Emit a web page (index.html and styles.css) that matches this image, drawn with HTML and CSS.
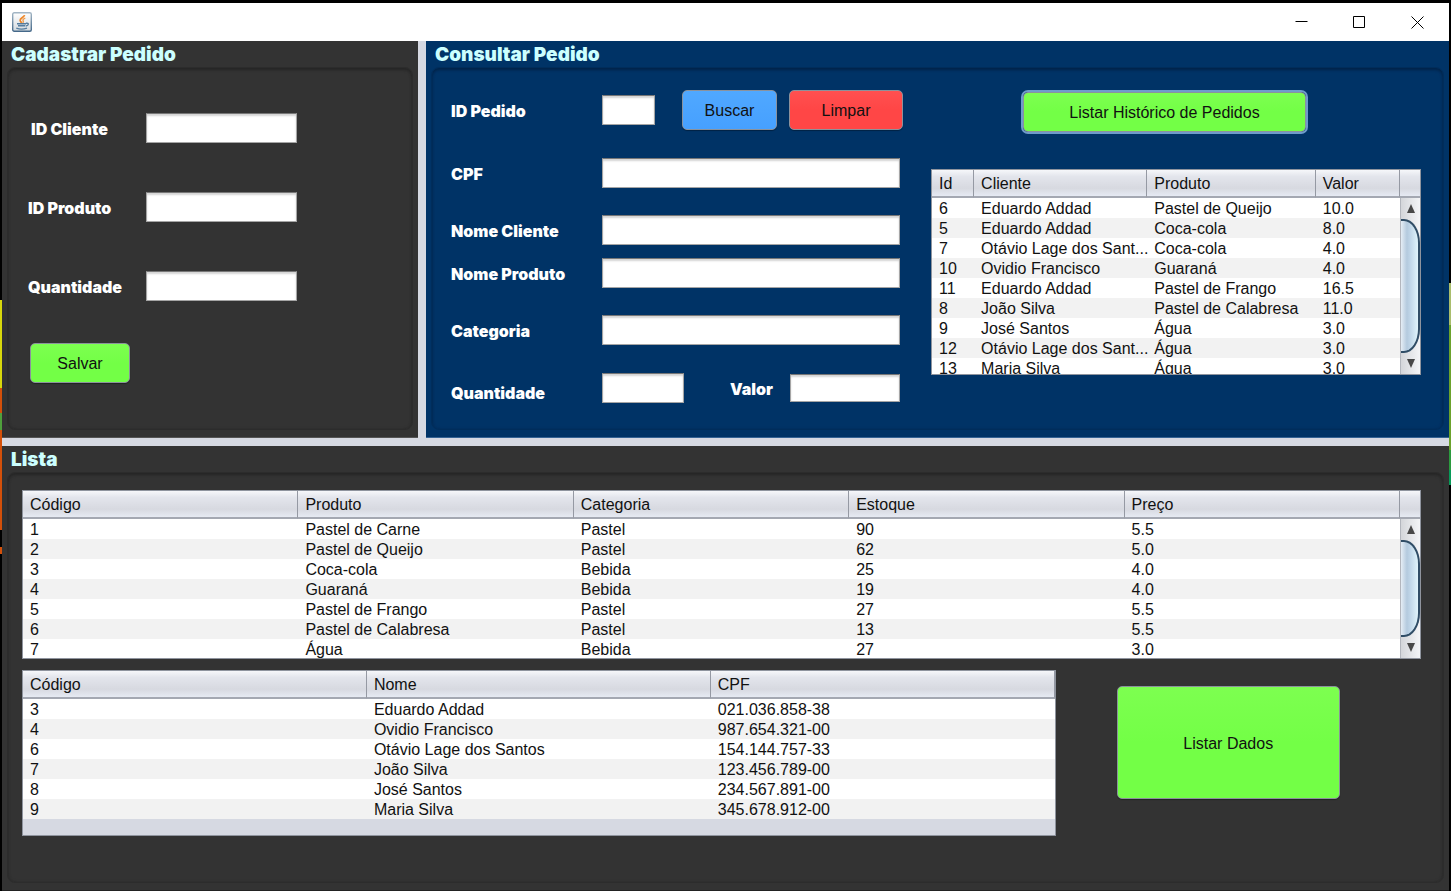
FILE: index.html
```html
<!DOCTYPE html>
<html lang="pt-BR">
<head>
<meta charset="utf-8">
<title>Pedidos</title>
<link rel="stylesheet" href="styles.css">
</head>
<body>
<div class="window">
  <header class="titlebar">
    <svg class="java-icon" viewBox="0 0 20 20" aria-hidden="true">
      <defs>
        <linearGradient id="tile" x1="0" y1="0" x2="0" y2="1"><stop offset="0" stop-color="#fff"/><stop offset="1" stop-color="#d3d9de"/></linearGradient>
        <linearGradient id="rim" x1="0" y1="0" x2="0" y2="1"><stop offset="0" stop-color="#a3b6c5"/><stop offset="1" stop-color="#45698a"/></linearGradient>
      </defs>
      <rect x=".7" y=".7" width="18.6" height="18.6" rx="1.5" fill="url(#tile)" stroke="url(#rim)" stroke-width="1.4"/>
      <path d="M12.6 3.2C12.2 5.2 8 6 8.100 8.200C8.100 9.400 9.300 10 9.600 11" fill="none" stroke="#ee8526" stroke-width="1.700"/>
      <path d="M13.300 6.200C11.300 6.900 10.500 7.800 11.200 9C11.600 9.800 11.300 10.300 10.800 10.900" fill="none" stroke="#f09a48" stroke-width="1.400"/>
      <path d="M5 11.700H14M6 13.700H13.200" fill="none" stroke="#557d9f" stroke-width="1.500"/>
      <path d="M14 11.300C17.200 10.600 17 13.500 13.800 14" fill="none" stroke="#557d9f" stroke-width="1.400"/>
      <path d="M4.300 16.100C7 17.200 12 17.200 15 16.100" fill="none" stroke="#557d9f" stroke-width="1.300"/>
    </svg>
    <div class="window-controls">
      <button type="button" aria-label="Minimizar"><svg viewBox="0 0 13 13"><path d="M.5 5.500H12.500"/></svg></button>
      <button type="button" aria-label="Maximizar"><svg viewBox="0 0 13 13"><path d="M.5 .5H11.500V11.500H.5Z"/></svg></button>
      <button type="button" aria-label="Fechar"><svg viewBox="0 0 13 13"><path d="M.5 .5L12.500 12.500M12.500 .5L.5 12.500"/></svg></button>
    </div>
  </header>

  <main class="panes">
    <section class="pane">
      <h2>Cadastrar Pedido</h2>
      <form class="box register">
        <div class="field first"><label for="cliente">ID Cliente</label><input id="cliente" type="text"></div>
        <div class="field"><label for="produto">ID Produto</label><input id="produto" type="text"></div>
        <div class="field"><label for="qtd">Quantidade</label><input id="qtd" type="text"></div>
        <button type="button" class="btn green save">Salvar</button>
      </form>
    </section>

    <section class="pane blue">
      <h2>Consultar Pedido</h2>
      <div class="box consult">
        <form class="query">
          <div class="line lookup">
            <label for="pedido">ID Pedido</label><input id="pedido" class="tiny" type="text">
            <button type="button" class="btn sky search">Buscar</button>
            <button type="button" class="btn red clear">Limpar</button>
          </div>
          <div class="line"><label for="cpf">CPF</label><input id="cpf" type="text"></div>
          <div class="line"><label for="nome-cliente">Nome Cliente</label><input id="nome-cliente" type="text"></div>
          <div class="line close"><label for="nome-produto">Nome Produto</label><input id="nome-produto" type="text"></div>
          <div class="line"><label for="categoria">Categoria</label><input id="categoria" type="text"></div>
          <div class="line amounts">
            <label class="low" for="quantidade">Quantidade</label><input id="quantidade" type="text">
            <label class="value-label" for="valor">Valor</label><input id="valor" class="value" type="text">
          </div>
        </form>
        <div class="history">
          <button type="button" class="btn green focused">Listar Histórico de Pedidos</button>
          <div class="grid history-grid">
            <table>
              <colgroup><col class="c-id"><col class="c-client"><col class="c-product"><col></colgroup>
              <thead><tr><th>Id</th><th>Cliente</th><th>Produto</th><th>Valor</th></tr></thead>
              <tbody>
                <tr><td>6</td><td>Eduardo Addad</td><td>Pastel de Queijo</td><td>10.0</td></tr>
                <tr><td>5</td><td>Eduardo Addad</td><td>Coca-cola</td><td>8.0</td></tr>
                <tr><td>7</td><td>Otávio Lage dos Sant...</td><td>Coca-cola</td><td>4.0</td></tr>
                <tr><td>10</td><td>Ovidio Francisco</td><td>Guaraná</td><td>4.0</td></tr>
                <tr><td>11</td><td>Eduardo Addad</td><td>Pastel de Frango</td><td>16.5</td></tr>
                <tr><td>8</td><td>João Silva</td><td>Pastel de Calabresa</td><td>11.0</td></tr>
                <tr><td>9</td><td>José Santos</td><td>Água</td><td>3.0</td></tr>
                <tr><td>12</td><td>Otávio Lage dos Sant...</td><td>Água</td><td>3.0</td></tr>
                <tr><td>13</td><td>Maria Silva</td><td>Água</td><td>3.0</td></tr>
              </tbody>
            </table>
            <div class="side">
              <div class="corner"></div>
              <div class="scrollbar">
                <svg class="arrow" viewBox="0 0 10 10"><path d="M5 0L9 9H1Z"/></svg>
                <div class="thumb"></div>
                <svg class="arrow" viewBox="0 0 10 10"><path d="M1 0H9L5 9Z"/></svg>
              </div>
            </div>
          </div>
        </div>
      </div>
    </section>

    <section class="pane wide">
      <h2>Lista</h2>
      <div class="box lists">
        <div class="grid product-grid">
          <table>
            <thead><tr><th>Código</th><th>Produto</th><th>Categoria</th><th>Estoque</th><th>Preço</th></tr></thead>
            <tbody>
              <tr><td>1</td><td>Pastel de Carne</td><td>Pastel</td><td>90</td><td>5.5</td></tr>
              <tr><td>2</td><td>Pastel de Queijo</td><td>Pastel</td><td>62</td><td>5.0</td></tr>
              <tr><td>3</td><td>Coca-cola</td><td>Bebida</td><td>25</td><td>4.0</td></tr>
              <tr><td>4</td><td>Guaraná</td><td>Bebida</td><td>19</td><td>4.0</td></tr>
              <tr><td>5</td><td>Pastel de Frango</td><td>Pastel</td><td>27</td><td>5.5</td></tr>
              <tr><td>6</td><td>Pastel de Calabresa</td><td>Pastel</td><td>13</td><td>5.5</td></tr>
              <tr><td>7</td><td>Água</td><td>Bebida</td><td>27</td><td>3.0</td></tr>
            </tbody>
          </table>
          <div class="side">
            <div class="corner"></div>
            <div class="scrollbar">
              <svg class="arrow" viewBox="0 0 10 10"><path d="M5 0L9 9H1Z"/></svg>
              <div class="thumb"></div>
              <svg class="arrow" viewBox="0 0 10 10"><path d="M1 0H9L5 9Z"/></svg>
            </div>
          </div>
        </div>
        <div class="people">
          <div class="grid people-grid">
            <table>
              <thead><tr><th>Código</th><th>Nome</th><th>CPF</th></tr></thead>
              <tbody>
                <tr><td>3</td><td>Eduardo Addad</td><td>021.036.858-38</td></tr>
                <tr><td>4</td><td>Ovidio Francisco</td><td>987.654.321-00</td></tr>
                <tr><td>6</td><td>Otávio Lage dos Santos</td><td>154.144.757-33</td></tr>
                <tr><td>7</td><td>João Silva</td><td>123.456.789-00</td></tr>
                <tr><td>8</td><td>José Santos</td><td>234.567.891-00</td></tr>
                <tr><td>9</td><td>Maria Silva</td><td>345.678.912-00</td></tr>
              </tbody>
            </table>
          </div>
          <div class="people-action"><button type="button" class="btn green big">Listar Dados</button></div>
        </div>
      </div>
    </section>
  </main>
</div>
</body>
</html>
```
FILE: styles.css
```css
* { box-sizing: border-box; }

body {
  margin: 0;
  min-height: 100vh;
  display: flex;
  font: 16px/20px "Liberation Sans", Arial, sans-serif;
  color: #111;
  background:
    linear-gradient(#000 0 300px, #d8d80c 300px 388px, #d4500a 388px 413px, #4fa03c 413px 430px, #d4500a 430px 530px, #000 530px 547px, #d4500a 547px 554px, #000 554px) left top / 2px 100% no-repeat,
    linear-gradient(#000 0 283px, #a9bd6c 283px 325px, #6ba22c 325px 450px, #2b9a3e 450px 470px, #079a58 470px 485px, #000 485px) right top / 2px 100% no-repeat,
    #000;
}

.window {
  flex: 1;
  min-width: 0;
  display: flex;
  flex-direction: column;
  margin: 3px 2px 0;
}

/* Title bar */
.titlebar {
  height: 38px;
  display: flex;
  align-items: center;
  justify-content: space-between;
  padding: 0 3px 0 10px;
  background: #fff;
}
.java-icon { width: 20px; height: 20px; }
.window-controls { display: flex; height: 100%; }
.window-controls button {
  width: 58px;
  border: 0;
  padding: 0;
  background: none;
  display: flex;
  align-items: center;
  justify-content: center;
}
.window-controls svg {
  width: 13px;
  height: 13px;
  fill: none;
  stroke: #000;
}

/* Split panes */
.panes {
  flex: 1;
  display: grid;
  grid-template-columns: 416fr 1023fr;
  grid-template-rows: 397fr 445fr;
  gap: 8px;
  background: #d6d9e2;
}
.pane {
  min-width: 0;
  display: flex;
  flex-direction: column;
  padding: 0 5px 7px;
  background: #333;
  border-bottom: 1px solid #555;
}
.pane.blue { background: #003366; border-bottom-color: #356394; }
.pane.wide { grid-column: 1 / -1; border-bottom-color: #222; }

h2 {
  margin: 0;
  padding: 4px 4px 2px;
  font: 900 19px/20px Inter, Roboto, sans-serif;
  color: #ccffff;
}
.box {
  flex: 1;
  border: 1px solid #2c2c2c;
  border-radius: 8px;
  box-shadow: inset 0 2px 3px #262626, inset 0 0 3px #2b2b2b;
}
.blue .box {
  border-color: #002d5b;
  box-shadow: inset 0 2px 3px #002349, inset 0 0 3px #002d5b;
}

label {
  padding-top: 2px;
  font: 900 16px/20px Inter, Roboto, sans-serif;
  color: #fff;
  white-space: nowrap;
}
input {
  height: 30px;
  padding: 0 6px;
  font: inherit;
  border: 1px solid #a5a5a5;
  border-top-color: #777;
  border-radius: 0;
  background: #fff;
  box-shadow: inset 0 2px 2px #d4d4d4;
}

.btn {
  padding: 2px 0 0;
  font: inherit;
  color: #111;
  border: 1px solid #8b929c;
  border-radius: 5px;
  box-shadow: 0 1px 1px #0005;
}
.green { background: linear-gradient(#7dff50, #73ff46 50%, #73ff46); }
.sky { background: linear-gradient(#50a8ff, #46a0ff); }
.red { background: linear-gradient(#ff5050, #ff4646 50%, #ff4646); }

/* Register form */
.register {
  display: flex;
  flex-direction: column;
  gap: 49px;
  padding: 45px 20px 0;
}
.field { display: grid; grid-template-columns: 118px 151px; align-items: center; }
.first label { padding-left: 3px; }
.save {
  width: 100px;
  height: 40px;
  margin: -7px 0 0 2px;
}

/* Consult form */
.consult {
  display: flex;
  gap: 28px;
  padding: 22px 22px 0 19px;
}
.query { display: flex; flex-direction: column; gap: 27px; width: 452px; }
.line { display: grid; grid-template-columns: 151px 298px; align-items: center; }
.line.lookup { display: flex; margin-bottom: 1px; }
.lookup label { width: 151px; }
.line.close { margin-top: -14px; }
.line.amounts { grid-template-columns: 151px 82px 106px 110px; margin-top: 1px; }
.low { align-self: end; }
.value-label { padding-left: 46px; }
.value { height: 28px; }
.tiny { width: 53px; }
.search { width: 95px; height: 40px; margin-left: 27px; }
.clear { width: 114px; height: 40px; margin-left: 12px; }

.history { flex: 1; min-width: 0; }
.focused {
  display: block;
  width: 283px;
  height: 40px;
  margin: 2px 0 37px 92px;
  box-shadow: 0 0 0 2px #6f9bcb;
}

/* Data tables */
.grid {
  display: flex;
  overflow: hidden;
  border: 1px solid #8f949e;
  background: #d6d9e2;
}
.history-grid { height: 206px; }
.product-grid { height: 169px; }
.people-grid { height: 166px; }
table {
  flex: 1;
  width: 100%;
  align-self: flex-start;
  table-layout: fixed;
  border-collapse: separate;
  border-spacing: 0;
}
.c-id { width: 9%; }
.c-client { width: 37%; }
.c-product { width: 36%; }
th, td {
  height: 20px;
  padding: 2px 0 0 7px;
  line-height: 18px;
  text-align: left;
  font-weight: normal;
  white-space: nowrap;
}
th, .corner {
  height: 28px;
  background: linear-gradient(#f6f7fa, #e3e5ec 25%, #d7d9e0 70%, #e6eaf3);
  border-bottom: 2px solid #a4a8b2;
}
th { border-right: 1px solid #9599a3; }
tbody tr { background: #fff; }
tbody tr:nth-child(even) { background: #f2f2f2; }

.side { width: 20px; display: flex; flex-direction: column; }
.scrollbar {
  flex: 1;
  display: flex;
  flex-direction: column;
  align-items: center;
  border-left: 1px solid #b3b6bd;
  background: linear-gradient(90deg, #d4d6da, #f4f5f7);
}
.arrow { width: 10px; height: 10px; margin: 6px 0 5px; fill: #484848; }
.thumb {
  flex: 1;
  align-self: stretch;
  border: 2px solid #304d66;
  border-left: 0;
  border-radius: 0 16px 16px 0 / 0 24px 24px 0;
  background: linear-gradient(90deg, #e5edf5, #b4cade 35%, #bdd3e6 50%, #e0f4fb);
}

/* Lists */
.lists { padding: 17px 22px 0 14px; }
.people {
  display: grid;
  grid-template-columns: 1033fr 365fr;
  margin-top: 11px;
}
.people-action { padding: 16px 0 0 61px; }
.big { width: 223px; height: 113px; }
```
